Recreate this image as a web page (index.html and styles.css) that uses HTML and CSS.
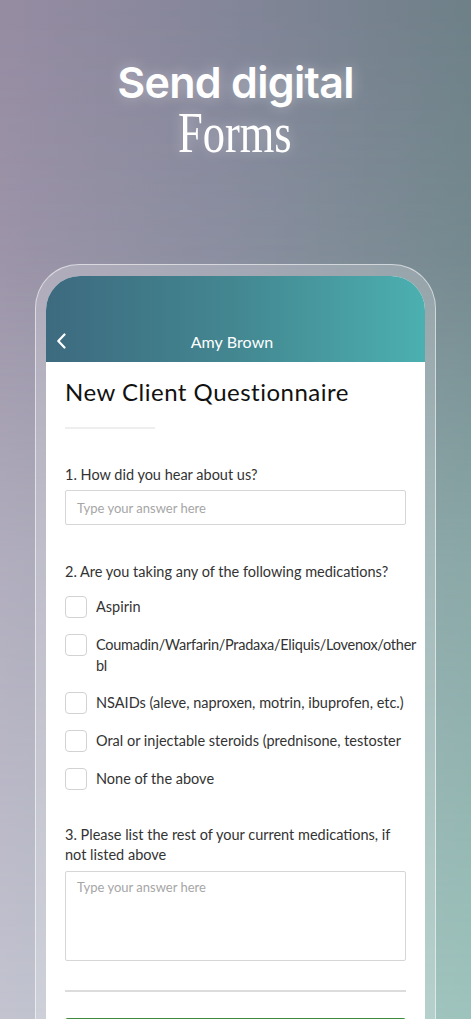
FILE: index.html
```html
<!DOCTYPE html>
<html lang="en">
<head>
<meta charset="utf-8">
<title>Send digital Forms</title>
<link rel="stylesheet" href="styles.css">
</head>
<body>
<div class="page">
  <header class="hero">
    <h1 class="hero-title">Send digital</h1>
    <div class="hero-sub"><span>Forms</span></div>
  </header>
  <div class="phone">
    <div class="screen">
      <div class="appbar">
        <div class="appbar-row">
          <svg class="back" width="12" height="16" viewBox="0 0 12 16"><path d="M8.5 1.5 L2.3 8 L8.5 14.5" fill="none" stroke="#fff" stroke-width="2.2" stroke-linecap="round" stroke-linejoin="round"/></svg>
          <span class="appbar-title">Amy Brown</span>
          <span class="spacer"></span>
        </div>
      </div>
      <main class="content">
        <h2 class="form-title">New Client Questionnaire</h2>
        <div class="short-rule"></div>

        <section class="q q1">
          <p class="q-label">1. How did you hear about us?</p>
          <div class="input">Type your answer here</div>
        </section>

        <section class="q q2">
          <p class="q-label">2. Are you taking any of the following medications?</p>
          <ul class="checks">
            <li><span class="box"></span><span class="opt">Aspirin</span></li>
            <li><span class="box"></span><span class="opt tight">Coumadin/Warfarin/Pradaxa/Eliquis/Lovenox/other<br>bl</span></li>
            <li><span class="box"></span><span class="opt">NSAIDs (aleve, naproxen, motrin, ibuprofen, etc.)</span></li>
            <li><span class="box"></span><span class="opt">Oral or injectable steroids (prednisone, testoster</span></li>
            <li><span class="box"></span><span class="opt">None of the above</span></li>
          </ul>
        </section>

        <section class="q q3">
          <p class="q-label">3. Please list the rest of your current medications, if not listed above</p>
          <div class="textarea">Type your answer here</div>
        </section>

        <div class="rule"></div>
        <div class="button"></div>
      </main>
    </div>
  </div>
</div>
</body>
</html>
```

FILE: styles.css
```css
* { box-sizing: border-box; }
html, body { margin: 0; padding: 0; }
body {
  width: 471px;
  height: 1019px;
  overflow: hidden;
  font-family: "Lato", "Liberation Sans", sans-serif;
}
.page {
  position: relative;
  width: 471px;
  height: 1019px;
  overflow: hidden;
  background: linear-gradient(90deg, #968ca2 0%, #85869a 45%, #6e8088 100%);
  isolation: isolate;
}
.page::before {
  content: "";
  position: absolute;
  inset: 0;
  z-index: -1;
  background: linear-gradient(90deg, #c3c3d0 0%, #b3c4c8 50%, #9dc3bc 100%);
  -webkit-mask-image: linear-gradient(to bottom, transparent 0%, rgba(0,0,0,0.15) 25%, rgba(0,0,0,0.6) 55%, #000 100%);
  mask-image: linear-gradient(to bottom, transparent 0%, rgba(0,0,0,0.15) 25%, rgba(0,0,0,0.6) 55%, #000 100%);
}
.page > * { position: relative; z-index: 1; }

.hero {
  padding-top: 57px;
  height: 264px;
  text-align: center;
  color: #fff;
}
.hero-title {
  margin: 0;
  font-family: "Inter", "Liberation Sans", sans-serif;
  font-weight: 600;
  font-size: 43px;
  line-height: 50px;
  letter-spacing: -0.7px;
  text-shadow: 0 0 14px rgba(255,255,255,0.35);
}
.hero-sub {
  margin: 0;
  line-height: 52px;
  padding-right: 2px;
}
.hero-sub span {
  display: inline-block;
  font-family: "Liberation Serif", serif;
  font-size: 57px;
  font-weight: 400;
  transform: scaleX(0.78);
  text-shadow: 0 0 14px rgba(255,255,255,0.35);
}

.phone {
  margin-left: 35px;
  width: 401px;
  height: 800px;
  padding: 11px 10px 0;
  border-radius: 44px 44px 0 0;
  background: rgba(255,255,255,0.22);
  border: 1.5px solid rgba(255,255,255,0.55);
  border-bottom: none;
}
.screen {
  height: 100%;
  background: #fff;
  border-radius: 34px 34px 0 0;
  overflow: hidden;
}
.appbar {
  height: 86px;
  background: linear-gradient(90deg, #3d6a7f 0%, #438791 50%, #4cb0b0 100%);
  display: flex;
  align-items: flex-end;
}
.appbar-row {
  width: 100%;
  height: 42px;
  display: flex;
  align-items: center;
  padding: 0 11px 0 10px;
}
.back { flex: 0 0 auto; }
.appbar-title {
  flex: 1;
  text-align: center;
  color: #fff;
  font-size: 16px;
  letter-spacing: 0.1px;
}
.spacer { width: 18px; }

.content {
  padding: 16px 19px 0 19px;
  color: #333;
}
.form-title {
  margin: 0;
  font-weight: 400;
  font-size: 24px;
  line-height: 28px;
  letter-spacing: 0.5px;
  color: #111;
}
.short-rule {
  margin: 21px 0 0 0;
  width: 90px;
  height: 2px;
  background: #eeeeee;
}
.q-label {
  margin: 0;
  font-size: 14.5px;
  line-height: 20px;
  color: #333;
}
.q1 { margin-top: 36px; }
.input {
  margin-top: 5px;
  height: 35px;
  border: 1px solid #d6d6d6;
  border-radius: 2px;
  padding: 0 11px;
  display: flex;
  align-items: center;
  font-size: 13px;
  color: #a6a6a6;
}
.q2 { margin-top: 37px; }
.checks {
  list-style: none;
  margin: 14px 0 0;
  padding: 0;
  display: flex;
  flex-direction: column;
  gap: 16px;
}
.checks li {
  display: flex;
  align-items: flex-start;
  gap: 9px;
}
.box {
  flex: 0 0 22px;
  width: 22px;
  height: 22px;
  border: 1px solid #d2d2d2;
  border-radius: 4px;
}
.opt {
  font-size: 14.5px;
  line-height: 21px;
  color: #333;
  white-space: nowrap;
}
.opt.tight { letter-spacing: -0.25px; }
.q3 { margin-top: 35px; }
.textarea {
  margin-top: 6px;
  height: 90px;
  border: 1px solid #d6d6d6;
  border-radius: 2px;
  padding: 7px 11px;
  font-size: 13px;
  color: #a6a6a6;
}
.rule {
  margin-top: 29px;
  height: 1.5px;
  background: #dcdcdc;
}
.button {
  margin-top: 26px;
  height: 44px;
  border: 2px solid #3f8a3f;
  border-radius: 3px;
}
```
